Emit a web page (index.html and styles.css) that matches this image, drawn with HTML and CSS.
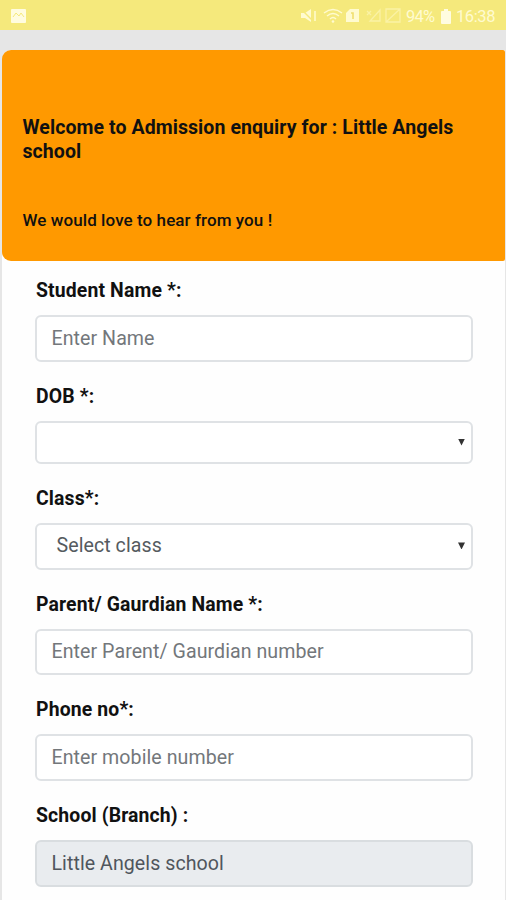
FILE: index.html
```html
<!DOCTYPE html>
<html lang="en">
<head>
<meta charset="utf-8">
<title>Admission enquiry</title>
<link rel="stylesheet" href="styles.css">
</head>
<body>
<header class="status">
  <svg class="photo" width="15" height="14" viewBox="0 0 15 14"><rect width="15" height="14" rx="1" fill="#fffce0"/><path d="M2 8l3-4 3 3 2-3 3 4" fill="none" stroke="#f5e97c" stroke-width="1"/></svg>
  <svg class="signals" width="104" height="18" viewBox="0 0 104 18" fill="#fffbd0">
    <path d="M1 6h4l6-4v13l-6-4H1z"/><path d="M1 2l13 13" stroke="#f5e97c" stroke-width="1.4"/><path d="M15 4v10" stroke="#fffbd0" stroke-width="1.5"/>
    <g fill="none" stroke="#fffbd0" stroke-width="1.5"><path d="M24 6q9-7 18 0M27 9q6-5 12 0M30 12q3-3 6 0"/></g><circle cx="33" cy="14.5" r="1.3"/>
    <path d="M50 2h9v13H46V6z"/><path d="M51 6h2v6" fill="none" stroke="#f0df6f" stroke-width="1.6"/>
    <path d="M67 4l4 4M71 4l-4 4M80 3v11H70z" fill="none" stroke="#faf2a5" stroke-width="1.3"/>
    <path d="M86 2h14v13H86zM86 15L100 2" fill="none" stroke="#faf2a5" stroke-width="1.3"/>
  </svg>
  <span class="percent">94%</span>
  <svg class="battery" width="10" height="15" viewBox="0 0 10 15"><path d="M3 0h4v2h2q1 0 1 1v11q0 1-1 1H1q-1 0-1-1V3q0-1 1-1h2z" fill="#fffce0"/></svg>
  <span class="clock">16:38</span>
</header>
<main class="page">
  <section class="banner">
    <h1>Welcome to Admission enquiry for : Little Angels school</h1>
    <p>We would love to hear from you !</p>
  </section>
  <form class="form">
    <div class="group"><label>Student Name *:</label><div class="field">Enter Name</div></div>
    <div class="group"><label>DOB *:</label><div class="field date"><i class="arrow"></i></div></div>
    <div class="group"><label>Class*:</label><div class="field select">Select class<i class="arrow"></i></div></div>
    <div class="group"><label>Parent/ Gaurdian Name *:</label><div class="field">Enter Parent/ Gaurdian number</div></div>
    <div class="group"><label>Phone no*:</label><div class="field">Enter mobile number</div></div>
    <div class="group"><label>School (Branch) :</label><div class="field disabled">Little Angels school</div></div>
  </form>
</main>
</body>
</html>
```
FILE: styles.css
```css
* { box-sizing: border-box; }
body { margin: 0; height: 900px; overflow: hidden; background: #e6e6e6; font-family: Roboto, "Liberation Sans", sans-serif; color: #111; }
.status { height: 30px; background: #f5e97c; display: flex; align-items: center; padding: 2px 11px 0 11px; color: #fffbd0; font-size: 16.5px; }
.signals { margin-left: auto; }
.percent { margin-left: 2px; width: 29px; letter-spacing: -0.8px; }
.battery { margin: 0 5px 0 6px; }
.clock { width: 39px; letter-spacing: -0.4px; }
.page { margin: 20px 1px 0 2px; height: 850px; background: #fefefe; border-radius: 9px 0 0 0; }
.banner { height: 211px; background: #ff9900; border-radius: 9px 2px 2px 9px; padding: 66px 20px 0 20.5px; }
h1 { margin: 0; font-size: 19.5px; line-height: 23.5px; font-weight: 700; letter-spacing: 0.08px; }
p { margin: 45px 0 0; font-size: 17px; line-height: 24px; font-weight: 500; letter-spacing: 0.08px; }
.form { padding: 14.2px 32px 0 33px; }
.group { margin-bottom: 19px; }
label { display: flex; align-items: center; height: 30px; margin: 0 0 10px 1px; padding-top: 1px; font-size: 19.4px; font-weight: 700; letter-spacing: 0.14px; }
.field { height: 46.75px; width: 438px; border: 2px solid #dfe2e5; border-radius: 6px; padding: 0 6px 0.8px 14.5px; display: flex; align-items: center; font-size: 19.6px; letter-spacing: 0.06px; color: #73777b; background: #fff; }
.date { height: 43px; }
.select { padding-left: 19.5px; color: #555b60; }
.disabled { background: #e9ecef; border-color: #d9dde0; color: #50565d; }
.arrow { margin-left: auto; width: 7px; height: 7px; background: #333; clip-path: polygon(0 0, 100% 0, 50% 100%); }
```
